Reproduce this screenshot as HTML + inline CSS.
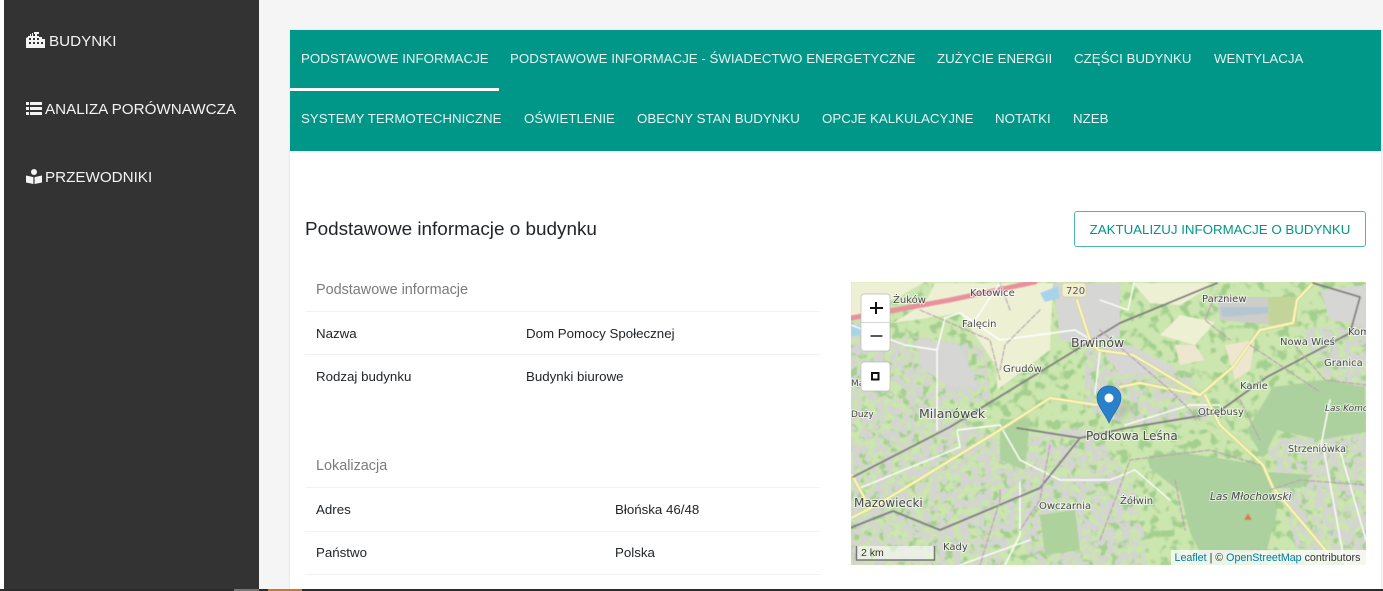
<!DOCTYPE html>
<html lang="pl"><head><meta charset="utf-8"><title>Budynki</title>
<style>
html,body{margin:0;padding:0;width:1383px;height:591px;overflow:hidden;background:#f5f5f5;font-family:"Liberation Sans",sans-serif}
.a{position:absolute;white-space:nowrap}
#side{left:4px;top:0;width:255px;height:589px;background:#333}
.nav{color:#f4f4f4;font-size:15.2px;line-height:20px}
#card{left:290px;top:30px;width:1091px;height:559px;background:#fff;box-shadow:0 0 2px rgba(0,0,0,.12)}
#tabs{left:290px;top:30px;width:1091px;height:121px;background:#009688}
.t{color:#e6f4f2;font-size:13.3px;line-height:20px}
.r{left:305px;width:515px;height:1px;background:#f1f1f1}
.d{color:#212529;font-size:13.3px;line-height:20px}
.h{color:#7b7b7b;font-size:14.4px;line-height:20px}
</style></head><body>
<div class="a" style="left:0;top:0;width:4px;height:589px;background:#fff"></div>
<div class="a" id="side"></div>
<svg class="a" style="left:26px;top:32px" width="20" height="16" viewBox="0 0 20 16"><path fill="#f4f4f4" d="M2 4h2V2h1v2h1V1h1v3h1V0h5v5h3v2h3v9H0V6l2-1z"/><g fill="#333"><rect x="3" y="6" width="2" height="2"/><rect x="7" y="6" width="2" height="2"/><rect x="11" y="6" width="2" height="2"/><rect x="3" y="10" width="2" height="2"/><rect x="7" y="10" width="2" height="2"/><rect x="11" y="10" width="2" height="2"/><rect x="15" y="10" width="2" height="2"/><rect x="7" y="2" width="2" height="2"/><rect x="11" y="2" width="2" height="2"/></g></svg>
<div class="a nav" style="left:49px;top:32px">BUDYNKI</div>
<svg class="a" style="left:26px;top:102px" width="16" height="13" viewBox="0 0 16 13"><g fill="#f4f4f4"><rect y="0" width="3" height="3"/><rect y="5" width="3" height="3"/><rect y="10" width="3" height="3"/><rect x="4" y="0" width="12" height="3"/><rect x="4" y="5" width="12" height="3"/><rect x="4" y="10" width="12" height="3"/></g></svg>
<div class="a nav" style="left:45px;top:100px">ANALIZA PORÓWNAWCZA</div>
<svg class="a" style="left:26px;top:169px" width="16" height="15" viewBox="0 0 16 15"><circle cx="8" cy="3" r="3" fill="#f4f4f4"/><path fill="#f4f4f4" d="M0 6.500l7.400 1.600V15L0 13.500zM16 6.500L8.600 8.100V15L16 13.500z"/></svg>
<div class="a nav" style="left:45px;top:168px">PRZEWODNIKI</div>

<div class="a" id="card"></div>
<div class="a" id="tabs"></div>
<div class="a" style="left:290px;top:88px;width:209px;height:3px;background:#fff"></div>
<div class="a t" style="left:301px;top:49px">PODSTAWOWE INFORMACJE</div>
<div class="a t" style="left:510px;top:49px">PODSTAWOWE INFORMACJE - ŚWIADECTWO ENERGETYCZNE</div>
<div class="a t" style="left:937px;top:49px">ZUŻYCIE ENERGII</div>
<div class="a t" style="left:1074px;top:49px">CZĘŚCI BUDYNKU</div>
<div class="a t" style="left:1214px;top:49px">WENTYLACJA</div>
<div class="a t" style="left:301px;top:109px">SYSTEMY TERMOTECHNICZNE</div>
<div class="a t" style="left:524px;top:109px">OŚWIETLENIE</div>
<div class="a t" style="left:637px;top:109px">OBECNY STAN BUDYNKU</div>
<div class="a t" style="left:822px;top:109px">OPCJE KALKULACYJNE</div>
<div class="a t" style="left:995px;top:109px">NOTATKI</div>
<div class="a t" style="left:1073px;top:109px">NZEB</div>

<div class="a" style="left:305px;top:219px;font-size:18.9px;line-height:22px;color:#212529">Podstawowe informacje o budynku</div>
<div class="a" style="left:1074px;top:211px;width:290px;height:34px;border:1px solid #4db6ac;border-radius:3px;color:#009688;font-size:13.3px;line-height:36px;text-align:center">ZAKTUALIZUJ INFORMACJE O BUDYNKU</div>

<div class="a h" style="left:316px;top:280px">Podstawowe informacje</div>
<div class="a r" style="top:311px"></div>
<div class="a d" style="left:316px;top:324px">Nazwa</div>
<div class="a d" style="left:526px;top:324px">Dom Pomocy Społecznej</div>
<div class="a r" style="top:354px"></div>
<div class="a d" style="left:316px;top:367px">Rodzaj budynku</div>
<div class="a d" style="left:526px;top:367px">Budynki biurowe</div>
<div class="a h" style="left:316px;top:456px">Lokalizacja</div>
<div class="a r" style="top:487px"></div>
<div class="a d" style="left:316px;top:500px">Adres</div>
<div class="a d" style="left:615px;top:500px">Błońska 46/48</div>
<div class="a r" style="top:531px"></div>
<div class="a d" style="left:316px;top:543px">Państwo</div>
<div class="a d" style="left:615px;top:543px">Polska</div>
<div class="a r" style="top:574px"></div>

<svg class="a" style="left:851px;top:282px" width="515" height="283" viewBox="851 282 515 283" font-family="'DejaVu Sans',sans-serif">
<defs>
<filter id="b"><feGaussianBlur stdDeviation="0.6"/></filter>
<filter id="s"><feGaussianBlur stdDeviation="4"/></filter>
<filter id="ng" x="0" y="0" width="1" height="1" color-interpolation-filters="sRGB"><feTurbulence type="fractalNoise" baseFrequency=".13" numOctaves="2" seed="4"/><feColorMatrix values="0 0 0 0 .83  0 0 0 0 .83  0 0 0 0 .82  7 0 0 0 -3"/><feComposite in2="SourceAlpha" operator="in"/><feGaussianBlur stdDeviation=".5"/></filter>
<filter id="nd" x="0" y="0" width="1" height="1" color-interpolation-filters="sRGB"><feTurbulence type="fractalNoise" baseFrequency=".1" numOctaves="2" seed="9"/><feColorMatrix values="0 0 0 0 .64  0 0 0 0 .81  0 0 0 0 .56  0 7 0 0 -3.700"/><feComposite in2="SourceAlpha" operator="in"/><feGaussianBlur stdDeviation=".5"/></filter>
</defs>
<rect x="851" y="282" width="515" height="283" fill="#cbe6ae"/>
<rect x="851" y="282" width="515" height="283" fill="#000" filter="url(#nd)"/>
<path fill="#000" filter="url(#ng)" d="M851 390L920 395 1000 440 1040 490 1000 565 851 565zM1000 440L1090 425 1130 480 1090 565 1030 565zM1085 345L1190 375 1215 420 1130 425 1085 410zM1265 440L1366 430 1366 560 1300 560zM905 335L985 345 990 400 930 410 880 370zM851 320L900 340 880 390 851 390zM1300 330L1366 320 1366 385 1330 385zM1130 470L1150 565 1090 565z"/>
<g filter="url(#b)">
<path fill="#eef0d4" d="M851 282H925L893 300 851 318zM893 323L960 313 997 367 997 390 1050 350 1053 283 935 283 925 303zM1133 283L1217 283 1180 305 1150 303zM1180 315L1215 322 1195 345 1160 335z"/>
<path fill="#efe6cf" d="M1175 345L1195 345 1205 360 1180 365zM1225 345L1255 340 1250 370 1235 380z"/>
<path fill="#d6d6d4" d="M1053 283L1120 283 1120 337 1085 345 1060 340zM917 340L960 345 977 387 945 385 920 365zM1100 345L1130 345 1180 370 1120 375zM1320 290L1366 285 1366 325 1330 320z"/>
<path fill="#add19e" d="M1147 458L1180 452 1217 458 1263 465 1270 485 1277 512 1270 538 1267 550 1200 553 1190 532 1180 492 1150 468zM1273 387L1327 380 1365 387 1366 432 1320 440 1277 430 1263 458 1247 430zM1267 472L1313 475 1300 488 1273 488zM1205 565L1195 552 1250 550 1265 558 1270 565z"/>
<path fill="#aed29c" d="M1000 420L1030 418 1025 470 1000 460zM1040 515L1075 510 1080 550 1045 555z"/>
<path fill="#cdcdc9" d="M1217 297L1297 297 1297 327 1220 320z"/>
<path fill="#b3c6d2" d="M1220 307L1272 307 1272 313 1223 317z"/>
<path fill="#c3d49a" d="M1268 297L1297 297 1297 327 1268 325z"/>
<path fill="#a9d3e8" d="M1040 293L1058 286 1060 298 1045 302zM851 325L862 326 860 335 851 336z"/>
<g fill="none" stroke-linecap="round" stroke-linejoin="round">
<path stroke="#e8909c" stroke-width="5" d="M851 318L950 300 1035 282"/>
<path stroke="#fff" stroke-width="1.400" d="M851 325L905 345 937 350M937 430L937 350 945 318 960 313 1000 340 1075 330 1100 345M1100 350L1095 395M1134 283L1128 310 1100 300M1000 283L975 320M960 565L1030 540M860 488L960 447 957 430 1000 425 1020 460 1060 480 1110 480 1135 470 1170 500M1020 482L1020 535 1005 565M1323 445L1345 565M1340 450L1366 540M1330 400L1320 450M1125 425L1190 405 1220 405"/>
<path stroke="#d9c77e" stroke-width="3.500" d="M852 475L870 508M877 505L1000 430 1050 398 1097 405M877 505L851 518M1077 300L1090 340 1098 350 1133 355 1200 395M1120 387L1140 383 1200 395 1233 367 1260 330 1293 323 1297 300 1313 283M1205 395L1220 425 1263 465 1273 488 1327 552"/>
<path stroke="#f7fabf" stroke-width="2.200" d="M852 475L870 508M877 505L1000 430 1050 398 1097 405M877 505L851 518M1077 300L1090 340 1098 350 1133 355 1200 395M1120 387L1140 383 1200 395 1233 367 1260 330 1293 323 1297 300 1313 283M1205 395L1220 425 1263 465 1273 488 1327 552"/>
<path stroke="#7f7f7f" stroke-width="1.800" d="M853 477L950 427 1120 323 1217 283M850 528L893 511 940 530 1040 488 1080 438 1017 428M1080 438L1127 428 1217 413 1267 377 1350 333 1360 297 1313 283"/>
<g stroke="#b7a2b0" stroke-width="1.200" stroke-dasharray="5 2">
<path d="M920 310L990 340 1000 380M1010 310L1000 283M1040 310L1005 345 1000 370M1100 330L1170 390 1200 420M1215 295L1205 320 1230 340M1290 340L1325 380 1366 385M1240 400L1260 440M1100 540L1130 460 1210 450 1260 465M1270 490L1300 480 1366 485M1000 490L1000 500 980 565M1050 445L1040 500 1020 530M1200 553L1270 550M1175 480L1185 530M1250 345L1320 392"/>
</g>
</g>
<path fill="#d08050" d="M1248 513l4 7h-8z"/>
</g>
<g fill="#4a4a4a" stroke="#fff" stroke-width="2" paint-order="stroke" stroke-opacity=".6">
<text x="893" y="303" font-size="10">Żuków</text>
<text x="970" y="296" font-size="10">Kotowice</text>
<text x="962" y="327" font-size="10">Falęcin</text>
<text x="1003" y="372" font-size="10">Grudów</text>
<text x="1071" y="347" font-size="12.500">Brwinów</text>
<text x="919" y="418" font-size="12.500">Milanówek</text>
<text x="1086" y="440" font-size="12">Podkowa Leśna</text>
<text x="854" y="507" font-size="12">Mazowiecki</text>
<text x="1039" y="509" font-size="10">Owczarnia</text>
<text x="1120" y="504" font-size="10">Żółwin</text>
<text x="943" y="550" font-size="10">Kady</text>
<text x="1202" y="302" font-size="10">Parzniew</text>
<text x="1280" y="345" font-size="10">Nowa Wieś</text>
<text x="1324" y="366" font-size="10">Granica</text>
<text x="1240" y="389" font-size="10">Kanie</text>
<text x="1198" y="415" font-size="10">Otrębusy</text>
<text x="1288" y="452" font-size="9.500">Strzeniówka</text>
<text x="1210" y="500" font-size="10.500" font-style="italic">Las Młochowski</text>
<text x="1325" y="411" font-size="9" font-style="italic">Las Komo</text>
<text x="1348" y="335" font-size="10">Kom</text>
<text x="851" y="386" font-size="9">Mały</text>
<text x="851" y="417" font-size="9">Duży</text>
</g>
<rect x="1062" y="283" width="24" height="14" rx="3" fill="#f2efd0" stroke="#d8d4ae"/>
<text x="1066" y="294" font-size="10" fill="#555">720</text>
<path d="M1116 422l16-16-10-2-4 10z" fill="#555" opacity=".35" filter="url(#s)"/>
<path d="M1109 386c-7 0-12 5-12 12 0 8 9 17 12 25 3-8 12-17 12-25 0-7-5-12-12-12z" fill="#2a81cb" stroke="#1c6aa8" stroke-width=".7"/>
<circle cx="1109" cy="398" r="4.500" fill="#fff"/>
<rect x="861" y="294" width="29" height="57" rx="3" fill="#fff" stroke="#bbb" stroke-width=".7"/>
<rect x="861" y="322" width="29" height=".8" fill="#ccc"/>
<path d="M876 302v12M870 308h13" stroke="#111" stroke-width="2"/>
<path d="M870.500 336h12" stroke="#222" stroke-width="1.500"/>
<rect x="861" y="362" width="29" height="29" rx="3" fill="#fff" stroke="#bbb" stroke-width=".7"/>
<rect x="872" y="373" width="6.500" height="6.500" fill="#fff" stroke="#111" stroke-width="2"/>
<rect x="856" y="546" width="78" height="14" fill="#fff" opacity=".55"/>
<path d="M856.500 546v14h78v-14" fill="none" stroke="#777" stroke-width="1.500"/>
<text x="861" y="556" font-size="10.500" font-family="'Liberation Sans',sans-serif" fill="#333">2 km</text>
<rect x="1171" y="550" width="195" height="15" fill="#fff" opacity=".75"/>
<text x="1174.500" y="561" font-size="10.700" font-family="'Liberation Sans',sans-serif" fill="#333"><tspan fill="#0078a8">Leaflet</tspan> | © <tspan fill="#0078a8">OpenStreetMap</tspan> contributors</text>
</svg>

<div class="a" style="left:0;top:589px;width:1383px;height:2px;background:#2b2b2b"></div>
<div class="a" style="left:234px;top:589px;width:25px;height:2px;background:#777"></div>
<div class="a" style="left:268px;top:589px;width:34px;height:2px;background:#c87a30"></div>
</body></html>
